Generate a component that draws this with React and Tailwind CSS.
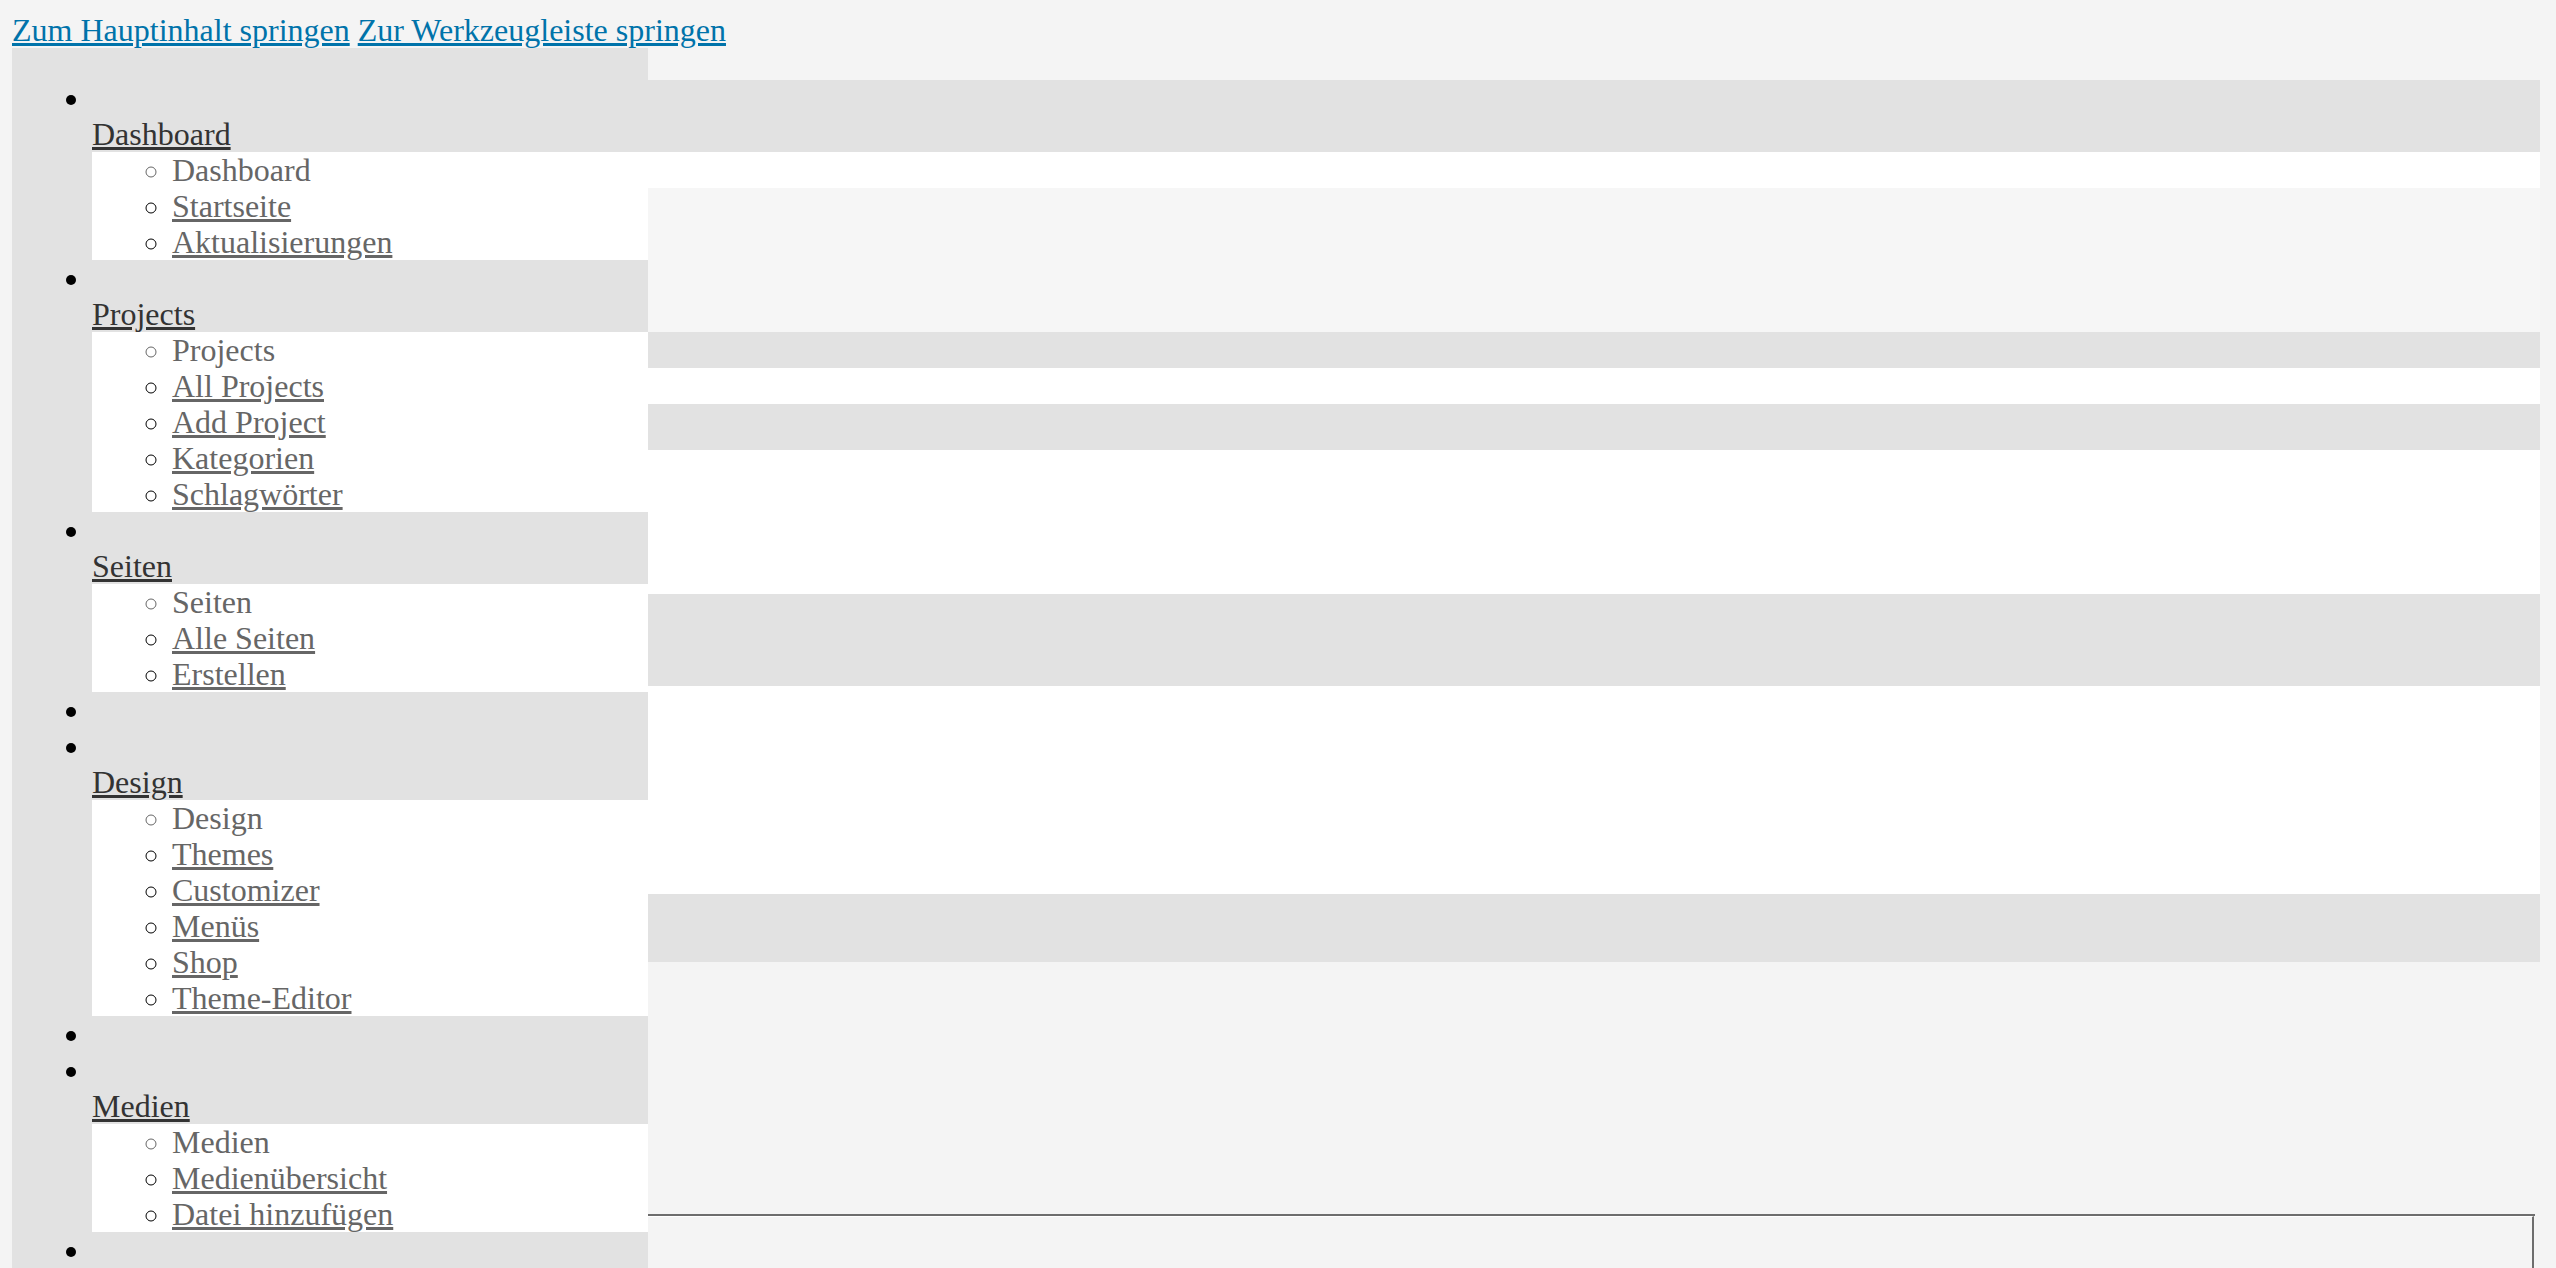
const menu = [
  { name: "Dashboard", subs: ["Startseite", "Aktualisierungen"] },
  { name: "Projects", subs: ["All Projects", "Add Project", "Kategorien", "Schlagwörter"] },
  { name: "Seiten", subs: ["Alle Seiten", "Erstellen"] },
  { separator: true },
  { name: "Design", subs: ["Themes", "Customizer", "Menüs", "Shop", "Theme-Editor"] },
  { separator: true },
  { name: "Medien", subs: ["Medienübersicht", "Datei hinzufügen"] },
  { separator: true },
];

// content blocks on the right, top to bottom
const blocks = [
  { h: "h-[72px]", bg: "bg-[#e2e2e2]" },
  { h: "h-[36px]", bg: "bg-white" },
  { h: "h-[144px]", bg: "bg-[#f6f6f6]" },
  { h: "h-[36px]", bg: "bg-[#e2e2e2]" },
  { h: "h-[36px]", bg: "bg-white" },
  { h: "h-[46px]", bg: "bg-[#e2e2e2]" },
  { h: "h-[144px]", bg: "bg-white" },
  { h: "h-[92px]", bg: "bg-[#e2e2e2]" },
  { h: "h-[208px]", bg: "bg-white" },
  { h: "h-[68px]", bg: "bg-[#e2e2e2]" },
  { h: "h-[252px]", bg: "" },
];

const MenuItem = ({ item }) => {
  if (item.separator) {
    return (
      <li>
        <div>{"\u00a0"}</div>
      </li>
    );
  }

  return (
    <li>
      <div>{"\u00a0"}</div>
      <div>
        <a href="#" className="text-[#333] underline">
          {item.name}
        </a>
      </div>
      {item.subs.length > 0 && (
        <ul className="list-[circle] bg-white pl-20">
          <li className="text-[#666]">{item.name}</li>
          {item.subs.map((sub) => (
            <li key={sub}>
              <a href="#" className="text-[#666] underline">
                {sub}
              </a>
            </li>
          ))}
        </ul>
      )}
    </li>
  );
};

export default function App() {
  return (
    <div className="h-[1268px] overflow-hidden bg-[#f4f4f4] pl-[12px] pt-[12px] font-['Liberation_Serif',serif] text-[32px] leading-[36px] text-black">
      <div>
        <a href="#" className="text-[#0073aa] underline">
          Zum Hauptinhalt springen
        </a>{" "}
        <a href="#" className="text-[#0073aa] underline">
          Zur Werkzeugleiste springen
        </a>
      </div>

      <div className="flex">
        <div className="w-[636px] shrink-0 bg-[#e2e2e2] pt-[32px]">
          <ul className="list-disc pl-20">
            {menu.map((item, i) => (
              <MenuItem key={i} item={item} />
            ))}
          </ul>
        </div>

        <div className="flex w-[1892px] shrink-0 flex-col pt-[32px]">
          {blocks.map((b, i) => (
            <div key={i} className={`${b.h} ${b.bg}`} />
          ))}
          <div className="w-[1887px] border-t-2 border-[#6d6d6d] pr-px">
            <div className="h-[200px] border-t border-r-2 border-t-white border-r-[#6d6d6d] bg-[#f4f4f4]" />
          </div>
        </div>
      </div>
    </div>
  );
}
